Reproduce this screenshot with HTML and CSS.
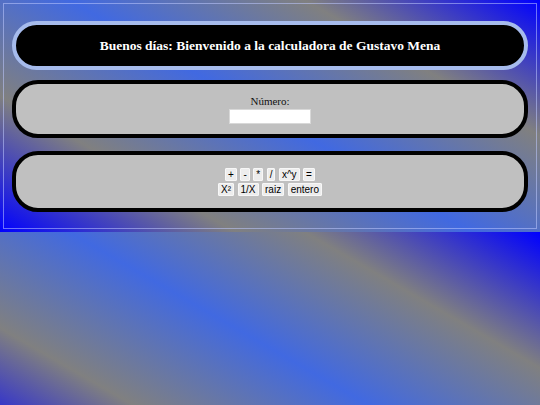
FILE: index.html
```html
<!DOCTYPE html>
<html lang="es">
<head>
<meta charset="utf-8">
<title>Calculadora</title>
<link rel="stylesheet" href="styles.css">
</head>
<body>
<div class="page">
  <header class="banner">Buenos días: Bienvenido a la calculadora de Gustavo Mena</header>
  <section class="panel panel-input">
    <label class="label" for="numero">Número:</label>
    <input class="field" id="numero" type="text">
  </section>
  <section class="panel panel-keys">
    <div class="row">
      <button class="key">+</button>
      <button class="key">-</button>
      <button class="key">*</button>
      <button class="key">/</button>
      <button class="key">x^y</button>
      <button class="key">=</button>
    </div>
    <div class="row">
      <button class="key">X²</button>
      <button class="key">1/X</button>
      <button class="key">raiz</button>
      <button class="key">entero</button>
    </div>
  </section>
</div>
</body>
</html>
```

FILE: styles.css
```css
body {
  margin: 3px;
  background: linear-gradient(30deg, blue, gray, royalblue, gray, blue);
  font-family: "Liberation Serif", "Times New Roman", serif;
}

.page {
  border: 1px solid rgba(190, 200, 255, 0.55);
  padding: 17px 8px 16px;
}

.banner {
  box-sizing: border-box;
  height: 49px;
  border: 4px solid #a6bbec;
  border-radius: 25px;
  background: #000;
  color: #fff;
  font-weight: bold;
  font-size: 13.5px;
  display: flex;
  align-items: center;
  justify-content: center;
  margin-bottom: 10px;
}

.panel {
  box-sizing: border-box;
  border: 4px solid #000;
  border-radius: 26px;
  background: #c0c0c0;
  display: flex;
  flex-direction: column;
  align-items: center;
  justify-content: center;
}

.panel-input {
  height: 58px;
  margin-bottom: 13px;
}

.panel-keys {
  height: 61px;
  gap: 2px;
}

.label {
  font-size: 11px;
  color: #111;
  line-height: 12px;
  margin-bottom: 2px;
}

.field {
  box-sizing: border-box;
  width: 82px;
  height: 15px;
  border: 1px solid #d8d8d8;
  background: #fff;
  padding: 0;
  margin: 0;
}

.row {
  display: flex;
  gap: 3.5px;
  justify-content: center;
}

.key {
  font-family: "Liberation Sans", Arial, sans-serif;
  font-size: 10px;
  line-height: 11px;
  padding: 0 2px;
  margin: 0;
  color: #000;
  background: #ededed;
  border: 1px solid #f7f7f7;
  border-radius: 1px;
}
```
